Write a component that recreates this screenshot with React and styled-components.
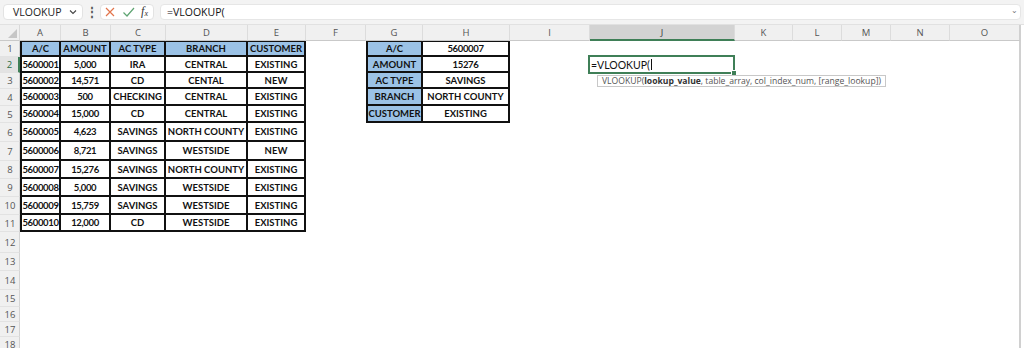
import React from "react"
import styled, { createGlobalStyle, css } from "styled-components"

const GlobalStyle = createGlobalStyle`
  html, body {
    margin: 0;
    padding: 0;
    background: #ffffff;
  }
  body {
    font-family: "Open Sans", "Noto Sans", sans-serif;
    overflow: hidden;
  }
`

const columns = [
  { name: "A", width: 41 },
  { name: "B", width: 50 },
  { name: "C", width: 55 },
  { name: "D", width: 82 },
  { name: "E", width: 58 },
  { name: "F", width: 60 },
  { name: "G", width: 57 },
  { name: "H", width: 87 },
  { name: "I", width: 80 },
  { name: "J", width: 145 },
  { name: "K", width: 58 },
  { name: "L", width: 49 },
  { name: "M", width: 49 },
  { name: "N", width: 59 },
  { name: "O", width: 71 },
]

const rowHeights = [16, 16, 16, 17, 17, 19, 19, 18, 18, 18, 17, 21, 18, 19, 17, 15, 15, 15]

const accounts = [
  ["A/C", "AMOUNT", "AC TYPE", "BRANCH", "CUSTOMER"],
  ["5600001", "5,000", "IRA", "CENTRAL", "EXISTING"],
  ["5600002", "14,571", "CD", "CENTAL", "NEW"],
  ["5600003", "500", "CHECKING", "CENTRAL", "EXISTING"],
  ["5600004", "15,000", "CD", "CENTRAL", "EXISTING"],
  ["5600005", "4,623", "SAVINGS", "NORTH COUNTY", "EXISTING"],
  ["5600006", "8,721", "SAVINGS", "WESTSIDE", "NEW"],
  ["5600007", "15,276", "SAVINGS", "NORTH COUNTY", "EXISTING"],
  ["5600008", "5,000", "SAVINGS", "WESTSIDE", "EXISTING"],
  ["5600009", "15,759", "SAVINGS", "WESTSIDE", "EXISTING"],
  ["5600010", "12,000", "CD", "WESTSIDE", "EXISTING"],
]

const lookup = [
  ["A/C", "5600007"],
  ["AMOUNT", "15276"],
  ["AC TYPE", "SAVINGS"],
  ["BRANCH", "NORTH COUNTY"],
  ["CUSTOMER", "EXISTING"],
]

const ACTIVE_ROW = 1
const ACTIVE_COL = 9

function cellInfo(r, c) {
  if (c < 5 && r < accounts.length) {
    return { text: accounts[r][c], fill: r === 0, bordered: true, left: c === 0, top: r === 0 }
  }
  if ((c === 6 || c === 7) && r < lookup.length) {
    return { text: lookup[r][c - 6], fill: c === 6, bordered: true, left: c === 6, top: r === 0 }
  }
  return { text: "", fill: false, bordered: false }
}

export default function App() {
  return (
    <>
      <GlobalStyle />
      <Window>
        <FormulaBar>
          <NameBox>
            <span>VLOOKUP</span>
            <Chevron viewBox="0 0 10 10">
              <path d="M2 3.5 L5 6.5 L8 3.5" fill="none" stroke="#444" strokeWidth="1.1" />
            </Chevron>
          </NameBox>
          <Dots>⋮</Dots>
          <ActionBox>
            <svg width="12" height="12" viewBox="0 0 12 12">
              <path d="M2 2 L10 10 M10 2 L2 10" stroke="#e2744b" strokeWidth="1.2" fill="none" />
            </svg>
            <svg width="13" height="12" viewBox="0 0 13 12">
              <path d="M1.5 6.5 L5 10 L12 2" stroke="#5fa472" strokeWidth="1.2" fill="none" />
            </svg>
            <Fx>
              f<sub>x</sub>
            </Fx>
          </ActionBox>
          <FormulaInput>
            <span>=VLOOKUP(</span>
            <ExpandMark>⌄</ExpandMark>
          </FormulaInput>
        </FormulaBar>

        <Sheet>
          <Corner>
            <svg width="9" height="9" viewBox="0 0 9 9">
              <path d="M9 0 L9 9 L0 9 Z" fill="#c6c6c6" />
            </svg>
          </Corner>
          {columns.map((col, c) => (
            <ColHead key={col.name} $active={c === ACTIVE_COL} $last={c === columns.length - 1}>
              {col.name}
            </ColHead>
          ))}
          {rowHeights.map((h, r) => (
            <React.Fragment key={r}>
              <RowHead $active={r === ACTIVE_ROW}>{r + 1}</RowHead>
              {columns.map((col, c) => {
                if (r === ACTIVE_ROW && c === ACTIVE_COL) {
                  return (
                    <EditCell key={col.name}>
                      <EditBox>
                        =VLOOKUP(<Caret />
                        <FillHandle />
                      </EditBox>
                      <Tip>
                        VLOOKUP(<b>lookup_value</b>, table_array, col_index_num, [range_lookup])
                      </Tip>
                    </EditCell>
                  )
                }
                const info = cellInfo(r, c)
                return (
                  <Cell
                    key={col.name}
                    $fill={info.fill}
                    $bordered={info.bordered}
                    $left={info.left}
                    $top={info.top}
                    $num={/^[\d,]+$/.test(info.text)}
                    $last={c === columns.length - 1}
                  >
                    {info.text}
                  </Cell>
                )
              })}
            </React.Fragment>
          ))}
        </Sheet>
      </Window>
    </>
  )
}

const Window = styled.div`
  width: 1024px;
  height: 348px;
  overflow: hidden;
  background: #ffffff;
  display: flex;
  flex-direction: column;
`

const FormulaBar = styled.div`
  flex-shrink: 0;
  height: 25px;
  box-sizing: border-box;
  display: flex;
  align-items: center;
  padding: 0 3px 1px 3px;
  background: #f3f3f3;
  border-bottom: 1px solid #e1e1e1;
`

const NameBox = styled.div`
  width: 80px;
  height: 16px;
  box-sizing: border-box;
  display: flex;
  align-items: center;
  justify-content: space-between;
  padding: 0 4px 0 9px;
  background: #ffffff;
  border: 1px solid #e3e3e3;
  border-radius: 4px;
  font-size: 10.5px;
  color: #222;
`

const Chevron = styled.svg`
  width: 10px;
  height: 10px;
`

const Dots = styled.div`
  width: 17px;
  text-align: center;
  font-size: 12px;
  color: #555;
  font-weight: bold;
`

const ActionBox = styled.div`
  width: 54px;
  height: 16px;
  box-sizing: border-box;
  display: flex;
  align-items: center;
  justify-content: space-around;
  padding: 0 2px 0 0;
  background: #ffffff;
  border: 1px solid #e3e3e3;
  border-radius: 4px;
`

const Fx = styled.span`
  font-family: "Liberation Serif", "DejaVu Serif", serif;
  font-style: italic;
  font-size: 12px;
  color: #333;
  line-height: 1;
  sub {
    font-size: 8px;
    vertical-align: -1px;
  }
`

const FormulaInput = styled.div`
  flex: 1;
  margin-left: 6px;
  height: 16px;
  box-sizing: border-box;
  display: flex;
  align-items: center;
  justify-content: space-between;
  padding: 0 2px 0 6px;
  background: #ffffff;
  border: 1px solid #e6e6e6;
  border-radius: 4px;
  font-size: 10.5px;
  color: #111;
`

const ExpandMark = styled.span`
  font-size: 8px;
  color: #777;
  margin-top: -5px;
`

const Sheet = styled.div`
  flex-shrink: 0;
  display: grid;
  grid-template-columns: 20px ${columns.map((c) => c.width + "px").join(" ")};
  grid-template-rows: 16px ${rowHeights.map((h) => h + "px").join(" ")};
  background: #ffffff;
`

const headText = css`
  font-family: "Open Sans", "Noto Sans", sans-serif;
  font-size: 9.5px;
  color: #555;
`

const Corner = styled.div`
  background: #f0f0f0;
  border-right: 1px solid #d9d9d9;
  border-bottom: 1px solid #c9c9c9;
  display: flex;
  align-items: flex-end;
  justify-content: flex-end;
  padding: 0 2px 2px 0;
  box-sizing: border-box;
`

const ColHead = styled.div`
  ${headText};
  box-sizing: border-box;
  display: flex;
  align-items: center;
  justify-content: center;
  background: ${(p) => (p.$active ? "#d3d3d3" : "#f0f0f0")};
  border-right: 1px solid #dcdcdc;
  border-bottom: ${(p) => (p.$active ? "2px solid #3f7f57" : "1px solid #c9c9c9")};
  color: ${(p) => (p.$active ? "#333" : "#555")};
  ${(p) => p.$last && css`border-right: 2px solid #d0d0d0;`}
`

const RowHead = styled.div`
  ${headText};
  box-sizing: border-box;
  display: flex;
  align-items: center;
  justify-content: center;
  padding-left: 1px;
  background: ${(p) => (p.$active ? "#e3e3e3" : "#f0f0f0")};
  border-bottom: 1px solid #e2e2e2;
  border-right: ${(p) => (p.$active ? "2px solid #3f7f57" : "1px solid #d4d4d4")};
  color: ${(p) => (p.$active ? "#2f6e46" : "#555")};
`

const Cell = styled.div`
  box-sizing: border-box;
  display: flex;
  align-items: center;
  justify-content: center;
  white-space: nowrap;
  font-family: "Lato", "Carlito", sans-serif;
  font-weight: 700;
  font-size: 9.5px;
  letter-spacing: ${(p) => (p.$num ? "-0.35px" : "0")};
  color: #111;
  background: ${(p) => (p.$fill ? "#9bc2e6" : "#ffffff")};
  ${(p) =>
    p.$bordered &&
    css`
      border-right: 2px solid #111;
      border-bottom: 2px solid #111;
    `}
  ${(p) => p.$left && css`border-left: 2px solid #111;`}
  ${(p) => p.$top && css`border-top: 1px solid #111;`}
  ${(p) => p.$last && css`border-right: 2px solid #d0d0d0;`}
`

const EditCell = styled.div`
  position: relative;
  z-index: 2;
`

const EditBox = styled.div`
  position: absolute;
  left: -2px;
  right: 0;
  top: -2px;
  bottom: -1px;
  box-sizing: border-box;
  display: flex;
  align-items: center;
  padding-left: 1px;
  border: 2px solid #3f7f57;
  background: #ffffff;
  font-family: "Lato", "Carlito", sans-serif;
  font-size: 10.5px;
  color: #111;
`

const Caret = styled.span`
  display: inline-block;
  width: 1px;
  height: 11px;
  margin-left: 1px;
  background: #111;
`

const FillHandle = styled.span`
  position: absolute;
  right: -4px;
  bottom: -4px;
  width: 4px;
  height: 4px;
  background: #3f7f57;
  border: 1px solid #ffffff;
`

const Tip = styled.div`
  position: absolute;
  left: 7px;
  top: 18px;
  height: 12px;
  box-sizing: border-box;
  display: flex;
  align-items: center;
  padding: 0 4px;
  white-space: nowrap;
  background: #ffffff;
  border: 1px solid #c8c8c8;
  font-family: "Open Sans", "Noto Sans", sans-serif;
  font-size: 8.6px;
  color: #555;
  b {
    color: #333;
    font-weight: 700;
    white-space: pre;
  }
`
